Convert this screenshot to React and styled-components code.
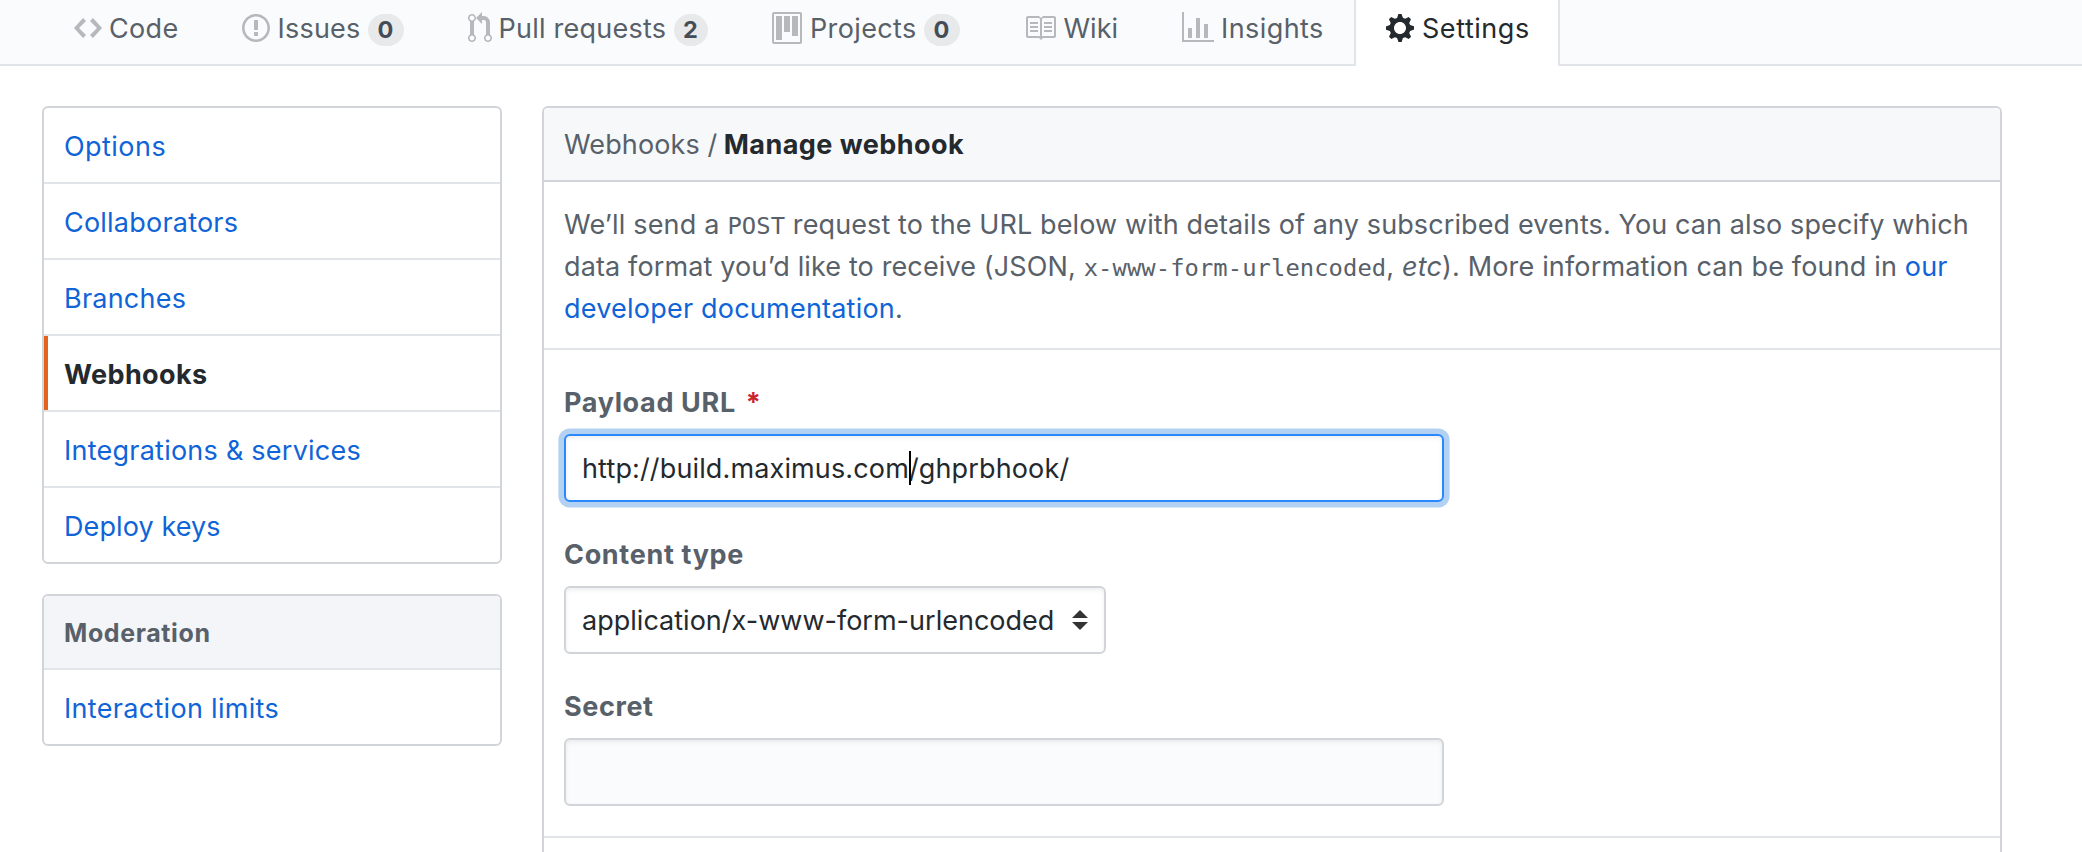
import React from "react";
import styled, { createGlobalStyle, css } from "styled-components";

const GlobalStyle = createGlobalStyle`
  * { box-sizing: border-box; }
  html, body { margin: 0; background: #fff; }
  body {
    height: 852px;
    overflow: hidden;
    color: #24292e;
    font-family: Inter, "Liberation Sans", sans-serif;
    font-size: 27px;
    line-height: 42px;
  }
  a { color: inherit; text-decoration: none; }
`;

const Track = styled.span`
  letter-spacing: ${(p) => p.$ls || 0}px;
`;

/* Repository navigation */
const RepoNav = styled.nav`
  display: flex;
  height: 66px;
  padding-left: 42px;
  background: #fafbfc;
  box-shadow: inset 0 -2px 0 #e1e4e8;
`;

const Tab = styled.a`
  display: flex;
  flex: none;
  align-items: center;
  width: ${(p) => p.$width}px;
  height: 66px;
  padding: 0 30px 10px;
  border: solid transparent;
  border-width: 0 2px;
  color: #586069;
  white-space: nowrap;
  ${(p) =>
    p.$active &&
    css`
      color: #24292e;
      background: #fff;
      border-color: #e1e4e8;
    `}
`;

const TabIcon = styled.svg`
  flex: none;
  height: 32px;
  width: ${(p) => p.$width}px;
  margin-right: ${(p) => p.$gap}px;
  fill: ${(p) => (p.$active ? "#24292e" : "rgba(27, 31, 35, 0.3)")};
`;

const TabLabel = styled.span`
  padding-top: 2px;
  letter-spacing: ${(p) => p.$ls}px;
`;

const Counter = styled.span`
  width: ${(p) => p.$width}px;
  height: 32px;
  margin: 4px 0 0 auto;
  padding-right: 1px;
  border-radius: 20px;
  background: rgba(27, 31, 35, 0.08);
  color: #444d56;
  font-size: 23.5px;
  font-weight: 700;
  line-height: 31px;
  text-align: center;
`;

/* Page columns */
const Columns = styled.main`
  display: flex;
  align-items: flex-start;
  gap: 40px;
  padding: 40px 80px 0 42px;
`;

const Sidebar = styled.aside`
  display: flex;
  flex: none;
  flex-direction: column;
  gap: 30px;
  width: 460px;
`;

const Menu = styled.nav`
  border: 2px solid #d1d5da;
  border-radius: 6px;
  overflow: hidden;
`;

const rowBase = css`
  display: block;
  padding-left: 20px;
  border-bottom: 2px solid #e1e4e8;
  letter-spacing: ${(p) => p.$ls}px;
  &:last-child { border-bottom: 0; }
`;

const MenuItem = styled.a`
  ${rowBase}
  height: ${(p) => (p.$last ? 74 : 76)}px;
  padding-top: 18px;
  color: #0f64d7;
  ${(p) =>
    p.$selected &&
    css`
      height: 74px;
      margin-bottom: 2px;
      padding-left: 16px;
      border-bottom: 0;
      border-left: 4px solid #e4621e;
      box-shadow: 0 2px 0 #e1e4e8;
      color: #24292e;
      font-weight: 700;
    `}
`;

const MenuHeading = styled.h3`
  ${rowBase}
  height: 74px;
  margin: 0;
  padding-top: 16px;
  background: #f3f5f8;
  color: #586069;
  font-size: 25px;
  font-weight: 700;
`;

/* Webhook panel */
const Panel = styled.section`
  flex: 1;
  height: 746px;
  border: 2px solid #d1d5da;
  border-bottom: 0;
  border-radius: 6px 6px 0 0;
  overflow: hidden;
`;

const PanelHeader = styled.header`
  height: 74px;
  padding: 16px 20px 0;
  border-bottom: 2px solid #d1d5da;
  background: #f6f8fa;
  color: #586069;
  white-space: nowrap;
`;

const PageTitle = styled.strong`
  margin-left: -1.5px;
  color: #24292e;
  font-weight: 700;
  letter-spacing: 0.45px;
`;

const Intro = styled.p`
  margin: 0;
  padding: 22px 0 18px 20px;
  border-bottom: 2px solid #e1e4e8;
  color: #586069;
  white-space: nowrap;
`;

const Code = styled.code`
  font-family: "DejaVu Sans Mono", "Liberation Mono", monospace;
  font-size: 23.8px;
  letter-spacing: 0.08px;
  line-height: 1;
`;

const Link = styled.a`
  && { color: #0f64d7; }
`;

const Form = styled.form`
  padding: 32px 20px 30px;
  border-bottom: 2px solid #e1e4e8;
`;

const Field = styled.div`
  & + & { margin-top: 32px; }
`;

const FieldLabel = styled.label`
  display: block;
  margin-bottom: 10px;
  color: #586069;
  font-weight: 700;
  letter-spacing: ${(p) => p.$ls}px;
`;

const Required = styled.span`
  margin-left: 10px;
  color: #cb2431;
`;

const Control = styled.div`
  display: flex;
  align-items: center;
  width: ${(p) => p.$width}px;
  height: 68px;
  padding: 0 16px;
  border: 2px solid ${(p) => (p.$focused ? "#2a88ff" : "#d1d5da")};
  border-radius: 6px;
  background: ${(p) => (p.$muted ? "#fafbfc" : "#fff")};
  box-shadow: inset 0 2px 4px rgba(27, 31, 35, 0.075)
    ${(p) => p.$focused && ", 0 0 0 5.6px rgba(3, 102, 214, 0.3)"};
  color: #24292e;
  letter-spacing: ${(p) => p.$ls || 0}px;
  white-space: nowrap;
`;

const ControlText = styled.span`
  padding-top: 1px;
`;

const Caret = styled.span`
  position: relative;
  &::after {
    content: "";
    position: absolute;
    top: -1px;
    left: 0;
    width: 2px;
    height: 34px;
    background: #000;
  }
`;

const SelectArrows = styled.svg`
  width: 16px;
  height: 20px;
  margin-left: auto;
  fill: #333;
`;

const icons = {
  code: [14, "M9.5 3L8 4.5 11.5 8 8 11.5 9.5 13 14 8 9.5 3zm-5 0L0 8l4.5 5L6 11.5 2.5 8 6 4.5 4.5 3z"],
  issue: [14, "M7 2.3c3.14 0 5.7 2.56 5.7 5.7s-2.56 5.7-5.7 5.7A5.71 5.71 0 0 1 1.3 8c0-3.14 2.56-5.7 5.7-5.7zM7 1C3.14 1 0 4.14 0 8s3.14 7 7 7 7-3.14 7-7-3.14-7-7-7zm1 3H6v5h2V4zm0 6H6v2h2v-2z"],
  pull: [12, "M11 11.28V5c-.03-.78-.34-1.47-.94-2.06C9.46 2.35 8.78 2.03 8 2H7V0L4 3l3 3V4h1c.27.02.48.11.69.31.21.2.3.42.31.69v6.28A1.993 1.993 0 0 0 10 15a1.993 1.993 0 0 0 1-3.72zm-1 2.92c-.66 0-1.2-.55-1.2-1.2 0-.65.55-1.2 1.2-1.2.65 0 1.2.55 1.2 1.2 0 .65-.55 1.2-1.2 1.2zM4 3c0-1.11-.89-2-2-2a1.993 1.993 0 0 0-1 3.72v6.56A1.993 1.993 0 0 0 2 15a1.993 1.993 0 0 0 1-3.72V4.72c.59-.34 1-.98 1-1.72zm-.8 10c0 .66-.55 1.2-1.2 1.2-.65 0-1.2-.55-1.2-1.2 0-.65.55-1.2 1.2-1.2.65 0 1.2.55 1.2 1.2zM2 4.2C1.34 4.2.8 3.65.8 3c0-.65.55-1.2 1.2-1.2.65 0 1.2.55 1.2 1.2 0 .65-.55 1.2-1.2 1.2z"],
  project: [15, "M10 12h3V2h-3v10zm-4-2h3V2H6v8zm-4 4h3V2H2v12zm-1 1h13V1H1v14zM14 0H1a1 1 0 0 0-1 1v14a1 1 0 0 0 1 1h13a1 1 0 0 0 1-1V1a1 1 0 0 0-1-1z"],
  book: [16, "M3 5h4v1H3V5zm0 3h4V7H3v1zm0 2h4V9H3v1zm11-5h-4v1h4V5zm0 2h-4v1h4V7zm0 2h-4v1h4V9zm2-6v9c0 .55-.45 1-1 1H9.5l-1 1-1-1H2c-.55 0-1-.45-1-1V3c0-.55.45-1 1-1h5.5l1 1 1-1H15c.55 0 1 .45 1 1zm-8 .5L7.5 3H2v9h6V3.5zm7-.5H9.5l-.5.5V12h6V3z"],
  graph: [16, "M16 14v1H0V0h1v14h15zM5 13H3V8h2v5zm4 0H7V3h2v10zm4 0h-2V6h2v7z"],
  gear: [14, "M14 8.77v-1.6l-1.94-.64-.45-1.09.88-1.84-1.13-1.13-1.81.91-1.09-.45-.69-1.92h-1.6l-.63 1.94-1.11.45-1.84-.88-1.13 1.13.91 1.81-.45 1.09L0 7.23v1.59l1.94.64.45 1.09-.88 1.84 1.13 1.13 1.81-.91 1.09.45.69 1.92h1.59l.63-1.94 1.11-.45 1.84.88 1.13-1.13-.92-1.81.47-1.09L14 8.75v.02zM7 11c-1.66 0-3-1.34-3-3s1.34-3 3-3 3 1.34 3 3-1.34 3-3 3z"],
};

const tabs = [
  { label: "Code", icon: "code", width: 168, gap: 7, ls: 0.32 },
  { label: "Issues", icon: "issue", width: 226, gap: 7.5, ls: 0.21, count: "0", countWidth: 36 },
  { label: "Pull requests", icon: "pull", width: 304, gap: 6.5, ls: 0.24, count: "2", countWidth: 34 },
  { label: "Projects", icon: "project", width: 252, gap: 8, ls: 0.37, count: "0", countWidth: 36 },
  { label: "Wiki", icon: "book", width: 158, gap: 7.5, ls: 0.01 },
  { label: "Insights", icon: "graph", width: 204, gap: 7, ls: 0.42 },
  { label: "Settings", icon: "gear", width: 206, gap: 8, ls: 0.55, active: true },
];

const settingsMenu = [
  { label: "Options", ls: 0.45 },
  { label: "Collaborators", ls: 0.215 },
  { label: "Branches", ls: 0.23 },
  { label: "Webhooks", ls: 0.38, selected: true },
  { label: "Integrations & services", ls: 0.24 },
  { label: "Deploy keys", ls: 0.1, last: true },
];

export default function App() {
  return (
    <>
      <GlobalStyle />
      <RepoNav>
        {tabs.map((t) => {
          const [w, d] = icons[t.icon];
          return (
            <Tab key={t.label} href="#" $width={t.width} $active={t.active}>
              <TabIcon viewBox={`0 0 ${w} 16`} $width={w * 2} $gap={t.gap} $active={t.active}>
                <path fillRule="evenodd" d={d} />
              </TabIcon>
              <TabLabel $ls={t.ls}>{t.label}</TabLabel>
              {t.count && <Counter $width={t.countWidth}>{t.count}</Counter>}
            </Tab>
          );
        })}
      </RepoNav>
      <Columns>
        <Sidebar>
          <Menu>
            {settingsMenu.map((m) => (
              <MenuItem key={m.label} href="#" $ls={m.ls} $selected={m.selected} $last={m.last}>
                {m.label}
              </MenuItem>
            ))}
          </Menu>
          <Menu>
            <MenuHeading $ls={0.62}>Moderation</MenuHeading>
            <MenuItem href="#" $ls={0.31} $last>
              Interaction limits
            </MenuItem>
          </Menu>
        </Sidebar>
        <Panel>
          <PanelHeader>
            <Track $ls={0.12}>Webhooks / </Track>
            <PageTitle>Manage webhook</PageTitle>
          </PanelHeader>
          <Intro>
            <Track $ls={0.2}>We’ll send a </Track>
            <Code>POST</Code>
            <Track $ls={0.11}>
              {" "}request to the URL below with details of any subscribed events. You can also specify which
            </Track>
            <br />
            <Track $ls={0.13}>data format you’d like to receive (JSON, </Track>
            <Code>x-www-form-urlencoded</Code>
            <Track $ls={0.16}>
              , <em>etc</em>). More information can be found in <Link href="#">our</Link>
            </Track>
            <br />
            <Track $ls={0.218}>
              <Link href="#">developer documentation</Link>.
            </Track>
          </Intro>
          <Form>
            <Field>
              <FieldLabel $ls={0.65}>
                Payload URL<Required>*</Required>
              </FieldLabel>
              <Control $width={880} $focused $ls={0.138}>
                <ControlText>http://build.maximus.com<Caret />/ghprbhook/</ControlText>
              </Control>
            </Field>
            <Field>
              <FieldLabel $ls={0.67}>Content type</FieldLabel>
              <Control $width={542} $ls={0.015}>
                <ControlText>application/x-www-form-urlencoded</ControlText>
                <SelectArrows viewBox="0 0 16 20">
                  <path d="M8 0l8 8H0zM0 12h16l-8 8z" />
                </SelectArrows>
              </Control>
            </Field>
            <Field>
              <FieldLabel $ls={0.6}>Secret</FieldLabel>
              <Control $width={880} $muted />
            </Field>
          </Form>
        </Panel>
      </Columns>
    </>
  );
}
